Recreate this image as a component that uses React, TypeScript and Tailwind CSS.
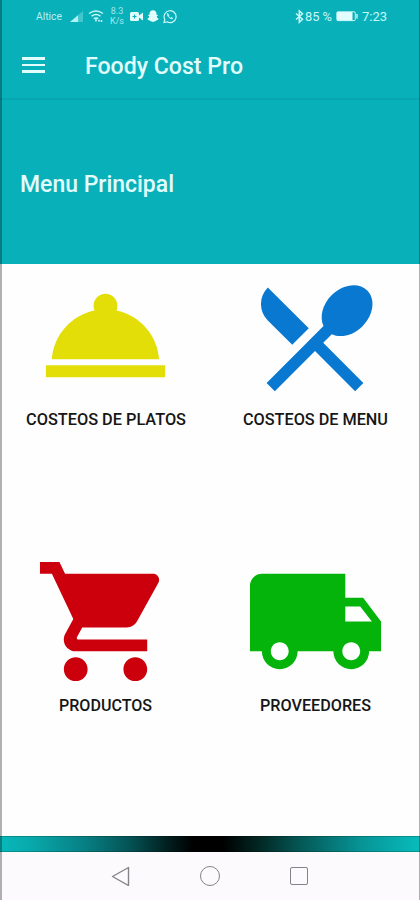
import React from "react";

type Tile = { label: string; labelWidth: number; color: string; path: string; icon: string };

const tiles: Tile[] = [
  {
    label: "COSTEOS DE PLATOS",
    labelWidth: 160,
    color: "text-[#e3de07]",
    icon: "w-[143px] h-[143px]",
    path: "M2 17h20v2H2zm11.84-9.21c.1-.24.16-.51.16-.79 0-1.1-.9-2-2-2s-2 .9-2 2c0 .28.06.55.16.79C6.25 8.6 3.27 11.93 3 16h18c-.27-4.07-3.25-7.4-7.16-8.21z",
  },
  {
    label: "COSTEOS DE MENU",
    labelWidth: 145,
    color: "text-[#0878d0]",
    icon: "w-[140px] h-[140px] mt-[3px]",
    path: "M8.1 13.34l2.83-2.83L3.91 3.5c-1.56 1.56-1.56 4.09 0 5.66l4.19 4.18zm6.78-1.81c1.53.71 3.68.21 5.27-1.38 1.91-1.91 2.28-4.65.81-6.12-1.46-1.46-4.2-1.1-6.12.81-1.59 1.59-2.09 3.74-1.38 5.27L3.7 19.87l1.41 1.41L12 14.41l6.88 6.88 1.41-1.41L13.41 13l1.47-1.47z",
  },
  {
    label: "PRODUCTOS",
    labelWidth: 93,
    color: "text-[#cc000c]",
    icon: "w-[143px] h-[143px]",
    path: "M7 18c-1.1 0-1.99.9-1.99 2S5.9 22 7 22s2-.9 2-2-.9-2-2-2zM1 2v2h2l3.6 7.59-1.35 2.45c-.16.28-.25.61-.25.96 0 1.1.9 2 2 2h12v-2H7.42c-.14 0-.25-.11-.25-.25l.03-.12.9-1.63h7.45c.75 0 1.41-.41 1.75-1.03l3.58-6.49c.08-.14.12-.31.12-.48 0-.55-.45-1-1-1H5.21l-.94-2H1zm16 16c-1.1 0-1.99.9-1.99 2s.89 2 1.99 2 2-.9 2-2-.9-2-2-2z",
  },
  {
    label: "PROVEEDORES",
    labelWidth: 111,
    color: "text-[#04b40a]",
    icon: "w-[143px] h-[143px]",
    path: "M20 8h-3V4H3c-1.1 0-2 .9-2 2v11h2c0 1.66 1.34 3 3 3s3-1.34 3-3h6c0 1.66 1.34 3 3 3s3-1.34 3-3h2v-5l-3-4zM6 18.5c-.83 0-1.5-.67-1.5-1.5s.67-1.5 1.5-1.5 1.5.67 1.5 1.5-.67 1.5-1.5 1.5zm13.5-9l1.96 2.5H17V9.5h2.5zm-1.5 9c-.83 0-1.5-.67-1.5-1.5s.67-1.5 1.5-1.5 1.5.67 1.5 1.5-.67 1.5-1.5 1.5z",
  },
];

type LabelProps = { text: string; width: number; size: number; y?: number; h?: number; className?: string };

/* Text fitted to a fixed width. */
function Label({ text, width, size, y = 15, h = 20, className = "" }: LabelProps) {
  return (
    <svg width={width} height={h} className={`shrink-0 overflow-visible font-[Roboto,sans-serif] ${className}`} fill="currentColor">
      <text x="0" y={y} fontSize={size} textLength={width} lengthAdjust="spacingAndGlyphs">{text}</text>
    </svg>
  );
}

function StatusBar() {
  return (
    <div className="flex h-8 items-center pl-[34px] text-[#c8f7f8]">
      <Label text="Altice" width={26} size={10.5} y={13.5} className="opacity-90" />
      <svg className="ml-2 h-4 w-[14px]" viewBox="0 0 14 16" fill="currentColor">
        <path d="M0 14L13 3v11z" opacity=".3" />
        <path d="M0 14l8-6.8V14z" opacity=".85" />
      </svg>
      <svg className="ml-1 h-4 w-4" viewBox="0 0 16 16" fill="none" stroke="currentColor" strokeWidth="1.5">
        <path d="M1 5.5q7-5 14 0M3.500 8.2q4.500-3.300 9 0M5.700 10.700q2.300-1.600 4.600 0" />
        <path d="M8 10.5v3M10.5 12l1 1.5M13.5 12v2" />
      </svg>
      <div className="ml-[6px] flex w-[14px] flex-col items-center font-[Roboto,sans-serif] text-[9px] leading-[10px] opacity-80">
        <span>8.3</span>
        <span>K/s</span>
      </div>
      <svg className="ml-[6px] h-4 w-[13px]" viewBox="0 0 13 16" fill="#e2fdfd">
        <rect x="0" y="4" width="9" height="9" rx="1.5" />
        <path d="M9 7.5L13 4.5v8L9 9.5z" />
        <path d="M2.5 8.500h4M4.500 6.500v4" stroke="#08b0ba" />
      </svg>
      <svg className="ml-1 h-4 w-[12px]" viewBox="0 0 12 16" fill="#e2fdfd">
        <path d="M6 2.300c2.500 0 3.700 1.600 3.500 4.500l1.700.3-1.500 1.400c.3 1.300 1.100 2 2.100 2.500-.6.800-1.200.9-2 1l-.6 1c-1.400-.3-1.700.8-3.200.8s-1.800-1.100-3.200-.8l-.6-1c-.8-.1-1.400-.2-2-1 1-.5 1.800-1.200 2.100-2.500L.8 7.100l1.700-.3C2.300 3.900 3.500 2.300 6 2.300z" />
      </svg>
      <svg className="ml-1 h-[15px] w-[14px]" viewBox="0 0 14 15" fill="none" stroke="currentColor" strokeWidth="1.2">
        <path d="M1 13.500l.8-3A6 6 0 1 1 4 12.800z" />
        <path d="M4.500 4.200c-.8 1.200.1 3 1.600 4.300s3 1.800 3.800.8l-1.700-1-.8.800C6.500 8.600 5.800 8 5.500 7l.6-.8z" fill="currentColor" strokeWidth=".6" />
      </svg>
      <svg className="ml-[118px] h-[15px] w-[9px]" viewBox="0 0 9 15" fill="none" stroke="currentColor" strokeWidth="1.5">
        <path d="M1 4.500l6.500 5.700-3.200 3V2l3.200 2.800L1 10.500" />
      </svg>
      <Label text="85 %" width={27} size={13.5} y={15} className="ml-px" />
      <svg className="ml-1 h-4 w-[23px]" viewBox="0 0 23 16" fill="none" stroke="currentColor">
        <rect x=".8" y="3.8" width="18.500" height="8.8" rx="1.2" strokeWidth="1" />
        <path d="M1 4h15.500v8.500H1z" fill="#e2fdfd" stroke="none" />
        <path d="M21 6v4.500" strokeWidth="1.4" />
      </svg>
      <Label text="7:23" width={25} size={13.5} y={15} className="ml-[3px]" />
    </div>
  );
}

export default function App() {
  return (
    <div className="relative flex h-[900px] w-[420px] flex-col overflow-hidden bg-[#fefefe] font-[Roboto,sans-serif]">
      <header className="h-[264px] shrink-0 bg-[#08b0ba] text-[#e2fdfd]">
        <div className="h-[100px] border-b-2 border-[#07a6b1]">
          <div className="pl-[2px]">
            <StatusBar />
          </div>
          <div className="flex h-[66px] items-center pl-[22px]">
            <div className="flex w-[23px] flex-col gap-1">
              <span className="h-[2.5px] bg-current" />
              <span className="h-[2.5px] bg-current" />
              <span className="h-[2.5px] bg-current" />
            </div>
            <Label text="Foody Cost Pro" width={158} size={24} y={25} h={32} className="ml-10 font-medium" />
          </div>
        </div>
        <div className="flex h-[164px] items-center pl-5">
          <Label text="Menu Principal" width={154} size={24} y={26} h={32} className="font-medium" />
        </div>
      </header>

      <main className="grid h-[572px] shrink-0 grid-cols-2 grid-rows-2 pl-px">
        {tiles.map((t) => (
          <button key={t.label} className="flex flex-col items-center">
            <svg viewBox="0 0 24 24" fill="currentColor" className={`${t.icon} ${t.color} shrink-0`}>
              <path d={t.path} />
            </svg>
            <Label text={t.label} width={t.labelWidth} size={16} className="mt-[3px] font-medium text-[#161616]" />
          </button>
        ))}
      </main>

      <div className="h-4 shrink-0 border-y border-black/20 bg-[linear-gradient(90deg,#08b8ba_0%,#08aaac_7%,#078084_20%,#045254_31%,#021e1e_40%,#000_46%,#000_53%,#022420_61%,#045a58_72%,#079496_86%,#08bcbc_100%)]" />
      <nav className="flex flex-1 items-center bg-[#fcfafd] pl-[111px] text-[#858387]">
        <svg className="h-5 w-5" viewBox="0 0 20 20" fill="none" stroke="currentColor" strokeWidth="1.4" strokeLinejoin="round">
          <path d="M1.500 10.500L17.500 1.500v18z" />
        </svg>
        <div className="ml-[69px] size-5 rounded-full border-[1.5px] border-current" />
        <div className="ml-[70px] size-[18px] rounded-[2px] border-[1.5px] border-current" />
      </nav>

      <div className="pointer-events-none absolute inset-0 border-l-2 border-r border-black/30" />
    </div>
  );
}
